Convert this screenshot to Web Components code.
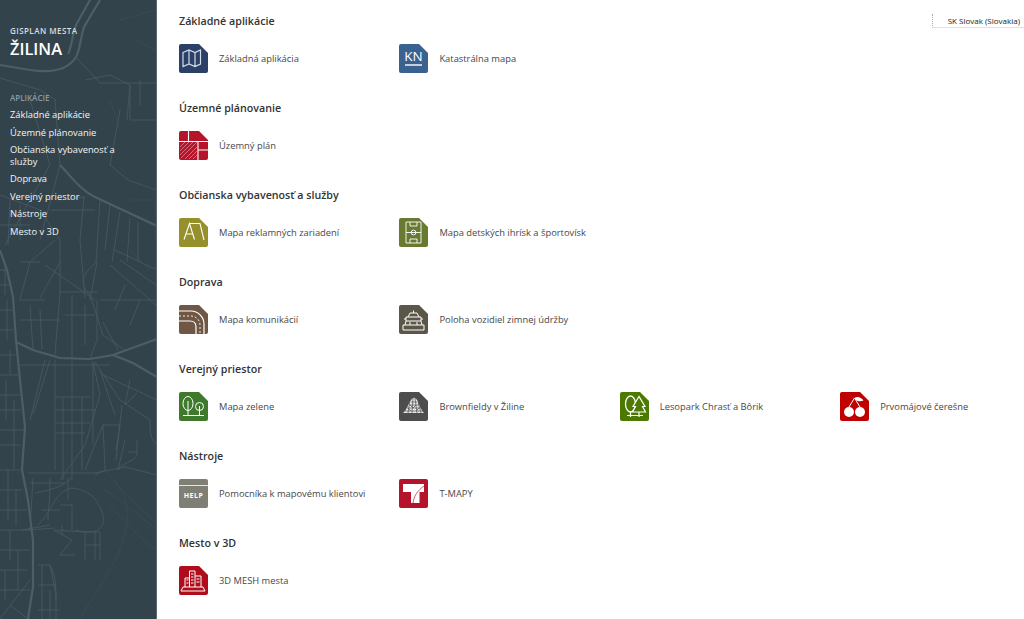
<!DOCTYPE html>
<html lang="sk">
<head>
<meta charset="utf-8">
<title>GISPLAN Žilina</title>
<style>
  html, body { margin: 0; height: 100%; background: #fff; }
  body { font-family: "Open Sans", "Liberation Sans", sans-serif; overflow: hidden; }
</style>
</head>
<body>
<portal-page>
  <side-bar slot="side">
    <side-link>Základné aplikácie</side-link>
    <side-link>Územné plánovanie</side-link>
    <side-link>Občianska vybavenosť a služby</side-link>
    <side-link>Doprava</side-link>
    <side-link>Verejný priestor</side-link>
    <side-link>Nástroje</side-link>
    <side-link>Mesto v 3D</side-link>
  </side-bar>
  <app-section heading="Základné aplikácie">
    <app-item icon="map" color="#2b4066">Základná aplikácia</app-item>
    <app-item icon="kn" color="#3a6290">Katastrálna mapa</app-item>
  </app-section>
  <app-section heading="Územné plánovanie">
    <app-item icon="plan" color="#b5152b">Územný plán</app-item>
  </app-section>
  <app-section heading="Občianska vybavenosť a služby">
    <app-item icon="swing" color="#96902c">Mapa reklamných zariadení</app-item>
    <app-item icon="pitch" color="#687a30">Mapa detských ihrísk a športovísk</app-item>
  </app-section>
  <app-section heading="Doprava">
    <app-item icon="road" color="#6f5645">Mapa komunikácií</app-item>
    <app-item icon="plow" color="#5a5648">Poloha vozidiel zimnej údržby</app-item>
  </app-section>
  <app-section heading="Verejný priestor">
    <app-item icon="trees" color="#3f7a2c">Mapa zelene</app-item>
    <app-item icon="heap" color="#4d4d4d">Brownfieldy v Žiline</app-item>
    <app-item icon="forest" color="#4c7a00">Lesopark Chrasť a Bôrik</app-item>
    <app-item icon="cherry" color="#c00000">Prvomájové čerešne</app-item>
  </app-section>
  <app-section heading="Nástroje">
    <app-item icon="help" color="#7f7f75">Pomocníka k mapovému klientovi</app-item>
    <app-item icon="tmapy" color="#b5122b">T-MAPY</app-item>
  </app-section>
  <app-section heading="Mesto v 3D">
    <app-item icon="city" color="#b00d1c">3D MESH mesta</app-item>
  </app-section>
</portal-page>

<script>
class PortalPage extends HTMLElement {
    constructor() {
        super();
        this.attachShadow({mode: "open"}).innerHTML = `
        <style>
            :host { display: flex; height: 619px; position: relative; }
            main { flex: 1; padding: 13px 0 0 22px; }
            .lang {
                position: absolute; top: 14px; right: 0; width: 92px; height: 14px; box-sizing: border-box;
                border-left: 1px dotted #aaa; border-bottom: 1px solid #e2e2e2; padding-right: 4px;
                font: 8px/14px "Open Sans", sans-serif; color: #222;
                text-align: right; white-space: nowrap;
            }
        </style>
        <slot name="side"></slot>
        <main><slot></slot></main>
        <div class="lang">SK Slovak (Slovakia)</div>`;
    }
}

// street grid of the sidebar background, coordinates traced from the reference
const MAJOR = [
    "M100 0L84 27C80 40 80 50 76 57C68 70 50 73 30 70L0 65",
    "M90 0L76 25C72 36 72 46 68 54",
    "M0 250L7 270L13 297L16 340L20 380L25 427L22 470L28 500L33 540L33 587L28 619",
    "M16 342L33 350L60 358L90 359L113 355L157 339",
    "M113 355L133 363L157 377",
    "M60 165C70 175 80 190 95 197L157 226"
];
const MINOR = [
    // upper part
    "M76 57L100 83M0 78L40 90L56 100M30 100L50 165L30 200L5 245M55 100L60 165M85 80L110 75L130 85V120H156",
    "M100 83H156M130 85L127 120M140 80V105M120 110L110 165L128 180L156 190",
    "M60 165L40 240M60 200L85 197M50 210H95M84 197L80 240M100 200L96 262M110 205L105 250M120 212L112 262M130 218L127 262",
    "M0 195L40 210L60 240M10 200L8 245M0 225H30M20 205V240M138 222V262",
    // radial area
    "M55 240L30 262L20 300M60 240L60 292M60 262L40 298M80 240L85 298M60 292H97M45 265L95 300M97 262L90 300",
    "M97 262C80 275 80 285 90 295L103 335M120 260L156 285M110 265L156 305M100 300H156M125 285L115 310M140 300L130 325M115 250L157 270",
    "M20 262H40M20 300H45M20 320H60M60 292L55 355M72 295V358M40 310L42 350M30 305L33 350M65 315H95M97 300V340L90 359",
    "M103 335L125 350M103 322L118 350M85 305V345",
    // grid under the highway
    "M20 365H110M45 360L30 420M55 360V470M63 397V480M72 360V480M82 397V470M93 362V445M50 360L33 415",
    "M55 397H90M55 410H95M55 423H90M55 433H85M60 480L85 445L100 395L93 362M85 470L103 425",
    "M95 362L120 400L150 420C150 430 150 440 157 445M103 375L157 400M100 370L115 415M130 380L125 405L137 393",
    "M103 425L105 470L95 475M103 425H120L116 450M122 405L116 460M125 440L118 470C125 460 138 462 137 452M137 440V452H128",
    // lower blocks
    "M28 473H95L125 467L157 475M30 483H65M33 478L30 530M50 478V490C50 500 48 510 48 520M68 478V500",
    "M35 493C50 490 60 488 72 478M38 525C50 515 55 490 72 488C90 490 100 500 104 520C102 530 95 535 75 530",
    "M60 505H72V530M42 510H60M55 530L85 532V560M85 532H100V560M85 545H100M95 532V560M62 525V535",
    "M28 530L55 528M22 530L50 525M54 530L72 540L60 555L75 555",
    "M38 565H50L56 595V619M38 585H56M42 565V619M50 565C56 575 56 590 56 600M38 610H60M50 590V619",
    // left strip
    "M0 270H8M0 285H10M5 262V295M0 310H14M7 300V340M0 330H13M0 355H15M0 375H18M10 350V375M0 395H20M6 380V420",
    "M0 410H21M0 430H24M14 400V470M0 445H20M0 470H20M0 490H22M8 470V520M0 510H26M16 490V525M0 530H30M10 530V560",
    "M0 550H30M0 570H28M18 550V590M5 570V600M0 590H30M0 619L30 580M10 605L28 619"
];
const FAINT = [
    "M103 470C130 490 135 520 115 560C100 590 90 600 80 619M113 480C130 500 150 515 157 525",
    "M105 490C120 500 145 520 157 530M108 505C125 520 140 540 157 550",
    "M130 200H156V240M130 250L150 270M110 100L120 130M135 40L156 50M120 20L156 10"
];

class SideBar extends HTMLElement {
    constructor() {
        super();
        this.attachShadow({mode: "open"}).innerHTML = `
        <style>
            :host {
                display: block; position: relative; flex: none; width: 157px; height: 619px;
                background: #33434c; color: #fff; overflow: hidden; box-sizing: border-box;
                padding: 25px 10px 0; border-right: 1px solid #5b6a72;
            }
            svg { position: absolute; left: 0; top: 0; }
            .inner { position: relative; }
            .brand { font-size: 8px; font-weight: 600; letter-spacing: .45px; line-height: 11px; color: #d7dde0; }
            h1 { margin: 1px 0 0; font-size: 16.4px; font-weight: 600; line-height: 24px; }
            h2 { margin: 31px 0 2px; font-size: 8px; font-weight: 600; line-height: 12px; color: #8b9aa2; }
        </style>
        <svg width="156" height="619" fill="none">
            <g stroke="#4c5e67" stroke-width="2.2"><path d="${MAJOR.join(" ")}"/></g>
            <g stroke="#4a5b64" stroke-width=".8"><path d="${MINOR.join(" ")}"/></g>
            <g stroke="#3d4e57" stroke-width=".7"><path d="${FAINT.join(" ")}"/></g>
        </svg>
        <div class="inner">
            <div class="brand">GISPLAN MESTA</div>
            <h1>ŽILINA</h1>
            <h2>APLIKÁCIE</h2>
            <slot></slot>
        </div>`;
    }
}

class SideLink extends HTMLElement {
    constructor() {
        super();
        this.attachShadow({mode: "open"}).innerHTML = `
        <style>
            :host { display: block; max-width: 122px; font-size: 9.35px; line-height: 11.5px; padding: 3px 0; color: #f2f4f5; }
        </style>
        <slot></slot>`;
    }
}

class AppSection extends HTMLElement {
    constructor() {
        super();
        const heading = this.getAttribute("heading");
        this.attachShadow({mode: "open"}).innerHTML = `
        <style>
            :host { display: block; height: 87px; }
            h3 { margin: 0 0 15px; font-size: 10.7px; font-weight: 600; line-height: 16px; color: #333; }
            .row { display: grid; grid-template-columns: repeat(4, 220.4px); }
        </style>
        <h3>${heading}</h3>
        <div class="row"><slot></slot></div>`;
    }
}

const ICONS = {
    map: `<path d="M4 8.5L10 6L16 8.5L21.5 6V20L16 22.5L10 20L4 22.5ZM10 6V20M16 8.5V22.5" fill="none" stroke="#d5dbe6" stroke-width="1.2"/>`,
    kn: `<text x="14.5" y="17" text-anchor="middle" font-size="13.5" fill="#fff" font-family="Open Sans, sans-serif">KN</text><path d="M6 21H23" stroke="#fff" stroke-width="1.4"/>`,
    plan: `<path d="M1 16L6 11M1 20L10 11M1 24L14 11M2 27L18 11M6 28L18 16M10 28L18 20M14 28L18 24" stroke="#fff" stroke-opacity=".55" stroke-width=".7"/><path d="M0 10.5H29M9.5 0V10.5M19 10.5V29M19 19H29" stroke="#fff" stroke-width="1.1" fill="none"/>`,
    swing: `<path d="M5 21.5L10.5 5.5L15.5 21.5M6.8 16H13.8M10.5 5.5H21L25 22" fill="none" stroke="#fff" stroke-width="1.1"/>`,
    pitch: `<path d="M7 4H22V25H7ZM7 14.5H22M11 4V8H18V4M11 25V21H18V25" fill="none" stroke="#fff" stroke-width=".9"/><circle cx="14.5" cy="14.5" r="2.4" fill="none" stroke="#fff" stroke-width=".9"/>`,
    road: `<path d="M0 6H12C19 6 25 12 25 19V29M0 16H11C15 16 17 18 17 22V29" fill="none" stroke="#fff" stroke-width="1.2"/><path d="M0 11H12C17 11 21 15 21 20V29" fill="none" stroke="#fff" stroke-width=".9" stroke-dasharray="2 2"/>`,
    plow: `<path d="M4 25V20H25V25ZM6 20L7 16H22L23 20M7 16V12H22V16M9 12L11 8H18L20 12M14.5 5.5V8M5 14H7M22 14H24M11 20V17M18 20V17" fill="none" stroke="#fff" stroke-width="1"/>`,
    trees: `<ellipse cx="9" cy="11.5" rx="5" ry="7" fill="none" stroke="#fff"/><path d="M9 9V23.5M20.5 14V23.5M4 23.5H25" stroke="#fff" fill="none"/><circle cx="20.5" cy="14.5" r="4" fill="none" stroke="#fff"/>`,
    heap: `<path d="M4 21C8 18 9 12 12 8C14 5 16 5 18 8C20 12 22 18 25 21Z" fill="#e8e8e8"/><path d="M6 19L24 19M8 16H22M10 13H20M12 10H18M11 8L9 21M14 6L13 21M16 6L18 21M19 10L22 21M11 13L14 16M17 13L14 16M9 16L12 19M20 16L17 19" stroke="#4d4d4d" stroke-width=".7"/>`,
    forest: `<ellipse cx="10.5" cy="12" rx="5" ry="8" fill="none" stroke="#fff" stroke-width="1.3"/><path d="M19 4.5L13 14.5H15.5L12.5 20H25.5L22.5 14.5H25Z" fill="#4c7a00" stroke="#fff" stroke-width="1.2"/><path d="M19 20V25M10.5 19V25M7 23.5H23" stroke="#fff" stroke-width="1.2"/>`,
    cherry: `<circle cx="9" cy="20" r="5" fill="#fff"/><circle cx="20" cy="20" r="5" fill="#fff"/><path d="M9 15L14.5 6L20 15" fill="none" stroke="#fff" stroke-width="1"/><path d="M14.5 6C17 4 21 5 23.5 8.5C20 10 16 9.5 14.5 6Z" fill="#fff"/>`,
    help: `<path d="M0 6.5H29" stroke="#fff" stroke-opacity=".8"/><text x="14.5" y="19" text-anchor="middle" font-size="7" font-weight="700" letter-spacing=".5" fill="#fff" font-family="Open Sans, sans-serif">HELP</text>`,
    tmapy: `<path d="M4 5H25V13H20.5V24H12V13H4Z" fill="#fff"/><path d="M14 24C15 17 18 12 25 7" fill="none" stroke="#b5122b" stroke-width=".7"/>`,
    city: `<path d="M6 21V12H10.5V5H16V10H22V21M4 21H24L26 25H2ZM10.5 12V21M16 10V21M7.5 14H9.5M7.5 17H9.5M12 8H14.5M12 11H14.5M12 14H14.5M12 17H14.5M17.5 13H20.5M17.5 16H20.5" fill="none" stroke="#fff" stroke-width="1"/>`
};

class AppItem extends HTMLElement {
    constructor() {
        super();
        const icon = this.getAttribute("icon");
        const color = this.getAttribute("color");
        const corner = icon === "help" || icon === "tmapy"
            ? "M2 0H27A2 2 0 0 1 29 2V27A2 2 0 0 1 27 29H2A2 2 0 0 1 0 27V2A2 2 0 0 1 2 0Z"
            : "M2 0H20L29 9V27A2 2 0 0 1 27 29H2A2 2 0 0 1 0 27V2A2 2 0 0 1 2 0Z";
        this.attachShadow({mode: "open"}).innerHTML = `
        <style>
            :host { display: flex; align-items: center; gap: 11px; height: 29px; font-size: 9.35px; color: #484848; white-space: nowrap; }
            svg { flex: none; }
        </style>
        <svg width="29" height="29" viewBox="0 0 29 29"><path d="${corner}" fill="${color}"/>${ICONS[icon]}</svg>
        <span><slot></slot></span>`;
    }
}

customElements.define("portal-page", PortalPage);
customElements.define("side-bar", SideBar);
customElements.define("side-link", SideLink);
customElements.define("app-section", AppSection);
customElements.define("app-item", AppItem);
</script>
</body>
</html>
